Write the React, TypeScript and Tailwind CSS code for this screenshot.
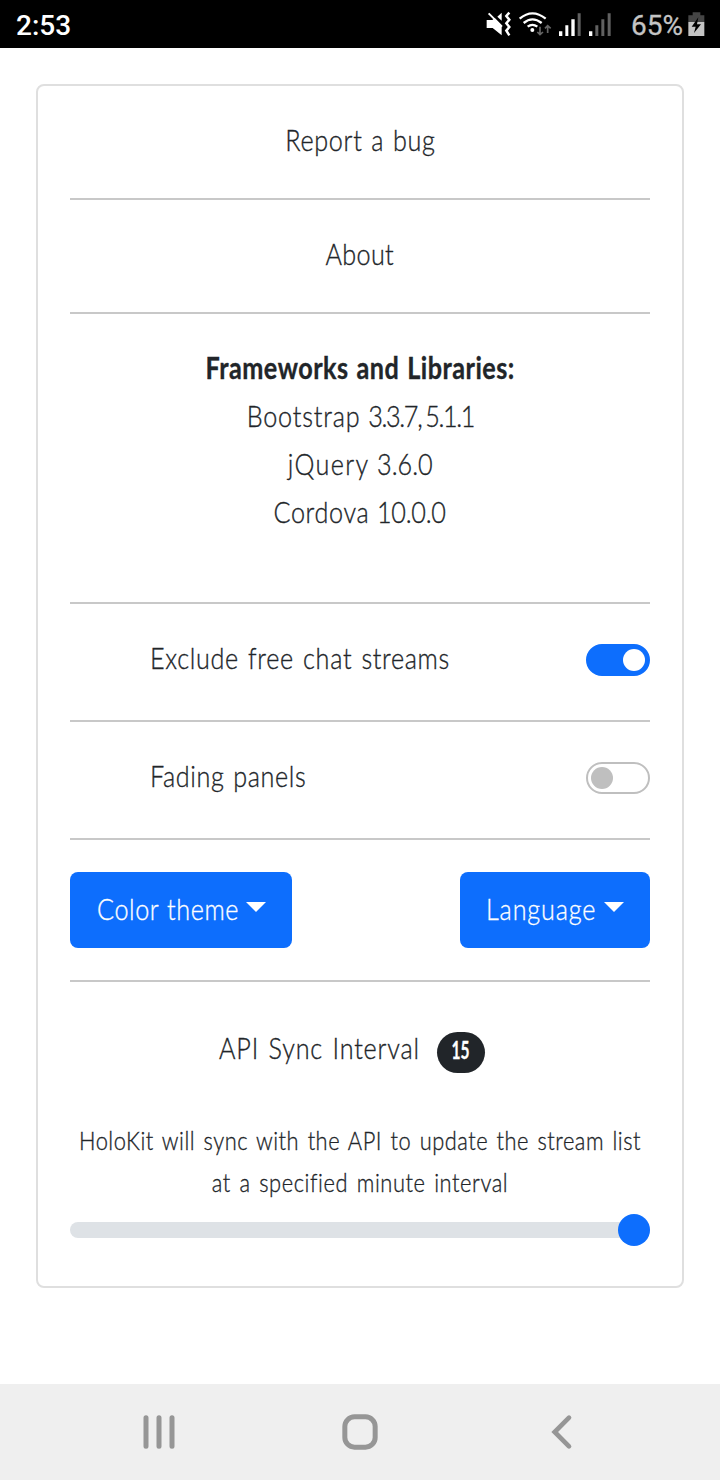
import { useState } from "react";
import type { ReactNode } from "react";

function StatusIcons() {
  return (
    <svg className="h-12 w-[130px]" viewBox="45 0 390 144" fill="none">
      <path d="M50 60H67L74 54L95 76V106L68 84H50Z" fill="#fff" />
      <path d="M82 50L95 38V62Z" fill="#fff" />
      <path d="M56 40L96 80" stroke="#fff" strokeWidth="6" />
      <path d="M118 38L109 48L118 59L109 70L118 81L109 92L118 106" stroke="#fff" strokeWidth="7.5" />
      <path d="M149 56Q187 24 227 56" stroke="#fff" strokeWidth="7" />
      <path d="M161 69Q187 47 215 69" stroke="#fff" strokeWidth="7" />
      <path d="M173 80Q187 69 202 80" stroke="#fff" strokeWidth="7" />
      <circle cx="187" cy="90" r="6" fill="#fff" />
      <path d="M210 80V104M202 96L210 104L219 96M233 99V77M225 85L233 77L242 85" stroke="#666" strokeWidth="5" />
      <path d="M267 94h10v14h-10zM286 76h9v32h-9zM304 58h10v50h-10zM357 94h10v14h-10z" fill="#fff" />
      <path d="M323 40h9v68h-9zM376 76h9v32h-9zM394 58h9v50h-9zM413 40h9v68h-9z" fill="#616161" />
    </svg>
  );
}

function BatteryIcon() {
  return (
    <svg className="h-12 w-5" viewBox="650 0 60 144">
      <path d="M667 37H690V46H702V67H654V46H667Z" fill="#454545" />
      <path d="M654 66H702V108H654Z" fill="#c4c4c4" />
      <path d="M684 52L664 80H676L671 99L692 73H680Z" fill="#000" />
    </svg>
  );
}

function Divider() {
  return <hr className="my-8 h-0.5 border-0 bg-[#c8c8c8]" />;
}

function Line({ children, className }: { children: ReactNode; className: string }) {
  return (
    <div className="h-12 text-center leading-[43px]">
      <span className={`inline-block scale-x-[0.84] whitespace-nowrap ${className}`}>{children}</span>
    </div>
  );
}

function Toggle({ label, initial, labelClass }: { label: string; initial: boolean; labelClass: string }) {
  const [on, setOn] = useState(initial);
  return (
    <div className="flex h-[52px] justify-between pl-20">
      <span className={`w-0 origin-left scale-x-[0.84] leading-[43px] whitespace-nowrap ${labelClass}`}>{label}</span>
      <button
        type="button"
        role="switch"
        aria-checked={on}
        aria-label={label}
        onClick={() => setOn(!on)}
        className={`mt-2 flex h-8 w-16 items-center rounded-full border-2 ${
          on ? "justify-end border-[#0d6efd] bg-[#0d6efd] pr-[3px]" : "justify-start border-[#bfbfbf] bg-white pl-[3px]"
        }`}
      >
        <span className={`size-[22px] rounded-full ${on ? "bg-white" : "bg-[#bfbfbf]"}`} />
      </button>
    </div>
  );
}

function DropdownButton({ label, className, labelClass }: { label: string; className: string; labelClass: string }) {
  return (
    <button type="button" className={`flex h-[76px] justify-between rounded-lg bg-[#0d6efd] pt-[13px] pr-[26px] text-white ${className}`}>
      <span className={`w-0 origin-left scale-x-[0.84] text-left leading-[46px] whitespace-nowrap ${labelClass}`}>{label}</span>
      <span className="mt-[17px] border-x-[10px] border-t-[10px] border-x-transparent border-t-white" />
    </button>
  );
}

export default function App() {
  return (
    <div className="flex h-[1480px] w-[720px] flex-col bg-white font-['Lato',sans-serif] text-[30px] font-light text-[#212529]">
      <header className="flex h-12 shrink-0 items-start justify-between bg-black pr-[13px] pl-4 font-['Roboto',sans-serif] text-[28px] leading-[51px]">
        <span className="font-medium text-white">2:53</span>
        <div className="flex h-12 items-start">
          <StatusIcons />
          <span className="ml-4 w-[56px] origin-left font-normal text-[#c4c4c4] [-webkit-text-stroke:0.3px]">65%</span>
          <BatteryIcon />
        </div>
      </header>

      <main className="flex-1 px-9 pt-9">
        <section className="h-[1204px] rounded-lg border-2 border-[#dfdfdf] p-8 [font-variant-ligatures:none] [-webkit-text-stroke:0.35px]">
          <Line className="tracking-[0.8px] [word-spacing:1.5px]">Report a bug</Line>
          <Divider />
          <Line className="tracking-[0.4px]">About</Line>
          <Divider />
          <Line className="font-bold tracking-[0.6px] [word-spacing:1.5px]">Frameworks and Libraries:</Line>
          <Line className="tracking-[1px]">
            Bootstrap <span className="tracking-[-1.6px] [word-spacing:-2px]">3.3.7, 5.1.1</span>
          </Line>
          <Line className="tracking-[1.6px]">
            jQuery <span className="tracking-[0px]">3.6.0</span>
          </Line>
          <Line className="tracking-[0.8px]">
            Cordova <span className="tracking-[-0.3px]">10.0.0</span>
          </Line>
          <div className="h-8" />
          <Divider />
          <Toggle label="Exclude free chat streams" initial={true} labelClass="tracking-[0.8px] [word-spacing:2px]" />
          <Divider />
          <Toggle label="Fading panels" initial={false} labelClass="tracking-[0.75px] [word-spacing:1.5px]" />
          <Divider />
          <div className="flex justify-between">
            <DropdownButton label="Color theme" className="w-[222px] pl-[27px]" labelClass="tracking-[0.7px] [word-spacing:1px]" />
            <DropdownButton label="Language" className="w-[190px] pl-[26px]" labelClass="tracking-[1px]" />
          </div>
          <Divider />
          <div className="flex h-[107px] pt-3 pl-[149px]">
            <span className="w-[218px] leading-[42px] whitespace-nowrap">
              <span className="inline-block origin-left scale-x-[0.84] tracking-[1px] [word-spacing:2px]">API Sync Interval</span>
            </span>
            <span className="mt-[6px] flex h-[41px] w-12 shrink-0 justify-center rounded-[21px] bg-[#212529] text-[25px] leading-[35px] font-bold text-white">
              <span className="scale-x-[0.62]">15</span>
            </span>
          </div>
          <p className="-mt-0.5 h-[103px] text-center text-[26px] leading-[42px]">
            <span className="-mx-12 block scale-x-[0.84] tracking-[0.6px] whitespace-nowrap [word-spacing:2.5px]">
              HoloKit will sync with the API to update the stream list
            </span>
            <span className="block scale-x-[0.84] tracking-[0.7px] whitespace-nowrap [word-spacing:2.5px]">
              at a specified minute interval
            </span>
          </p>
          <div className="flex h-4 items-center justify-end rounded-full bg-[#dee2e6]">
            <span className="size-8 rounded-full bg-[#0d6efd]" />
          </div>
        </section>
      </main>

      <nav className="flex h-24 shrink-0 items-center justify-between bg-[#efefef] px-[139px]">
        <svg className="size-10" viewBox="0 0 120 120" stroke="#969696" strokeWidth="15" strokeLinecap="round">
          <path d="M21 17V103M60 17V103M99 17V103" />
        </svg>
        <svg className="size-10" viewBox="0 0 120 120" stroke="#969696" strokeWidth="15" fill="none">
          <rect x="14.5" y="14.5" width="91" height="91" rx="29" />
        </svg>
        <svg className="size-10" viewBox="0 0 120 120" stroke="#969696" strokeWidth="14" strokeLinecap="round" fill="none">
          <path d="M84 17L41 60L84 103" />
        </svg>
      </nav>
    </div>
  );
}
